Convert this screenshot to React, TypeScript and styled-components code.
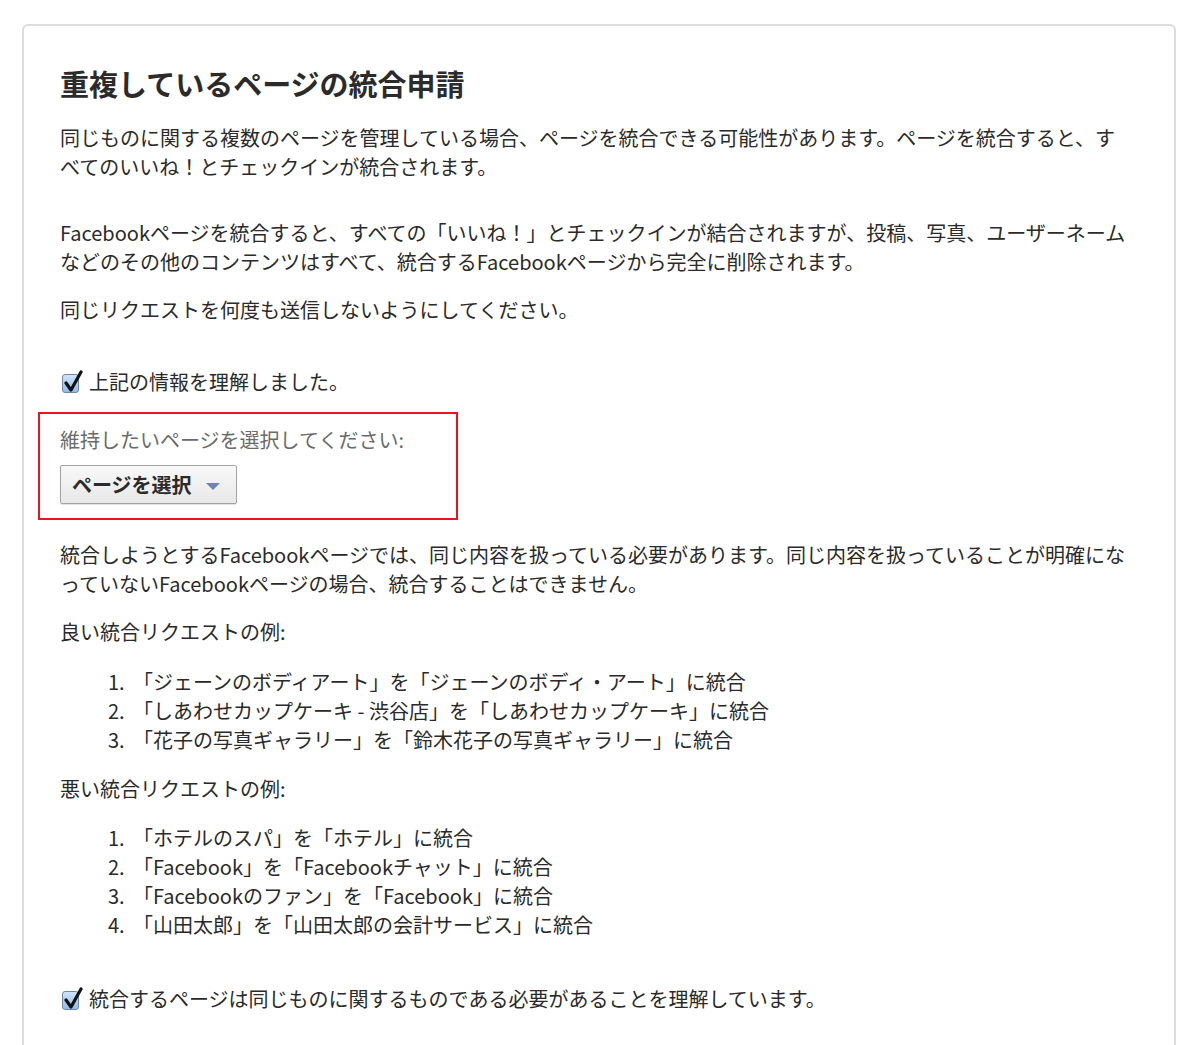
import React from 'react'
import styled, { createGlobalStyle } from 'styled-components'

const GlobalStyle = createGlobalStyle`
  html, body {
    margin: 0;
    padding: 0;
    background: #ffffff;
  }
  body {
    font-family: "Noto Sans CJK JP", "Noto Sans", sans-serif;
    color: #2a2a2a;
  }
`

const Page = styled.div`
  padding: 24px 24px 0 22px;
  height: 1045px;
  overflow: hidden;
  box-sizing: border-box;
`

const Card = styled.div`
  width: 1154px;
  box-sizing: border-box;
  border: 2px solid #dcdcdc;
  border-radius: 6px;
  padding: 39px 44px 120px 36px;
  background: #ffffff;
`

const Heading = styled.h1`
  margin: 0 0 22px;
  font-size: 29px;
  line-height: 36px;
  font-weight: 700;
  color: #2b2b2b;
`

const Text = styled.p<{ $top?: number; $muted?: boolean }>`
  margin: ${(p) => p.$top ?? 0}px 0 0;
  width: 1070px;
  font-size: 20px;
  line-height: 29px;
  color: ${(p) => (p.$muted ? '#6a6a6a' : '#2a2a2a')};
`

const CheckRow = styled.label<{ $top: number }>`
  display: flex;
  align-items: center;
  gap: 10px;
  margin-top: ${(p) => p.$top}px;
  margin-left: 2px;
  font-size: 20px;
  line-height: 29px;
  color: #2a2a2a;
`

const CheckBox = styled.span`
  position: relative;
  display: inline-block;
  width: 15px;
  height: 17px;
  margin-top: 4px;
  border: 1px solid #6f88aa;
  border-radius: 3px;
  background: linear-gradient(#cfe4fa, #8fbcea);
  flex-shrink: 0;
`

const CheckMark = styled.svg`
  position: absolute;
  left: 1px;
  top: -5px;
`

const Highlight = styled.div`
  margin: 16px 0 0 -22px;
  width: 420px;
  box-sizing: border-box;
  border: 2px solid #e8141e;
  padding: 11px 0 14px 20px;
`

const SelectButton = styled.button`
  display: inline-flex;
  align-items: center;
  gap: 14px;
  margin-top: 11px;
  height: 39px;
  width: 177px;
  padding: 0 0 0 11px;
  box-sizing: border-box;
  border: 1px solid #a3a3a3;
  border-radius: 2px;
  background: linear-gradient(#f8f8f8, #e8e8e8);
  box-shadow: 0 1px 1px rgba(0, 0, 0, 0.12);
  font-family: "Noto Sans CJK JP", "Noto Sans", sans-serif;
  font-size: 20px;
  font-weight: 700;
  color: #2a2a2a;
`

const Caret = styled.span`
  width: 0;
  height: 0;
  border-left: 7px solid transparent;
  border-right: 7px solid transparent;
  border-top: 7px solid #6d84b4;
  margin-top: 3px;
`

const List = styled.ol<{ $top: number }>`
  list-style: none;
  margin: ${(p) => p.$top}px 0 0;
  padding: 0 0 0 48px;
  font-size: 20px;
  line-height: 29px;
  color: #2a2a2a;
`

const Item = styled.li`
  display: flex;
`

const Num = styled.span`
  width: 25px;
  flex-shrink: 0;
`

const Check = () => (
  <CheckBox>
    <CheckMark width="20" height="24" viewBox="0 0 20 24">
      <path d="M2 13 L7 20 L17 2" fill="none" stroke="#111" strokeWidth="3.2" strokeLinecap="round" strokeLinejoin="round" />
    </CheckMark>
  </CheckBox>
)

const good = [
  '「ジェーンのボディアート」を「ジェーンのボディ・アート」に統合',
  '「しあわせカップケーキ - 渋谷店」を「しあわせカップケーキ」に統合',
  '「花子の写真ギャラリー」を「鈴木花子の写真ギャラリー」に統合',
]

const bad = [
  '「ホテルのスパ」を「ホテル」に統合',
  '「Facebook」を「Facebookチャット」に統合',
  '「Facebookのファン」を「Facebook」に統合',
  '「山田太郎」を「山田太郎の会計サービス」に統合',
]

const App = () => (
  <>
    <GlobalStyle />
    <Page>
      <Card>
        <Heading>重複しているページの統合申請</Heading>
        <Text>
          同じものに関する複数のページを管理している場合、ページを統合できる可能性があります。ページを統合すると、すべてのいいね！とチェックインが統合されます。
        </Text>
        <Text $top={37}>
          Facebookページを統合すると、すべての「いいね！」とチェックインが結合されますが、投稿、写真、ユーザーネームなどのその他のコンテンツはすべて、統合するFacebookページから完全に削除されます。
        </Text>
        <Text $top={19}>同じリクエストを何度も送信しないようにしてください。</Text>
        <CheckRow $top={43}>
          <Check />
          上記の情報を理解しました。
        </CheckRow>
        <Highlight>
          <Text $muted>維持したいページを選択してください:</Text>
          <SelectButton>
            ページを選択
            <Caret />
          </SelectButton>
        </Highlight>
        <Text $top={20}>
          統合しようとするFacebookページでは、同じ内容を扱っている必要があります。同じ内容を扱っていることが明確になっていないFacebookページの場合、統合することはできません。
        </Text>
        <Text $top={19}>良い統合リクエストの例:</Text>
        <List $top={21}>
          {good.map((t, i) => (
            <Item key={t}>
              <Num>{i + 1}.</Num>
              {t}
            </Item>
          ))}
        </List>
        <Text $top={20}>悪い統合リクエストの例:</Text>
        <List $top={20}>
          {bad.map((t, i) => (
            <Item key={t}>
              <Num>{i + 1}.</Num>
              {t}
            </Item>
          ))}
        </List>
        <CheckRow $top={45}>
          <Check />
          統合するページは同じものに関するものである必要があることを理解しています。
        </CheckRow>
      </Card>
    </Page>
  </>
)

export default App
